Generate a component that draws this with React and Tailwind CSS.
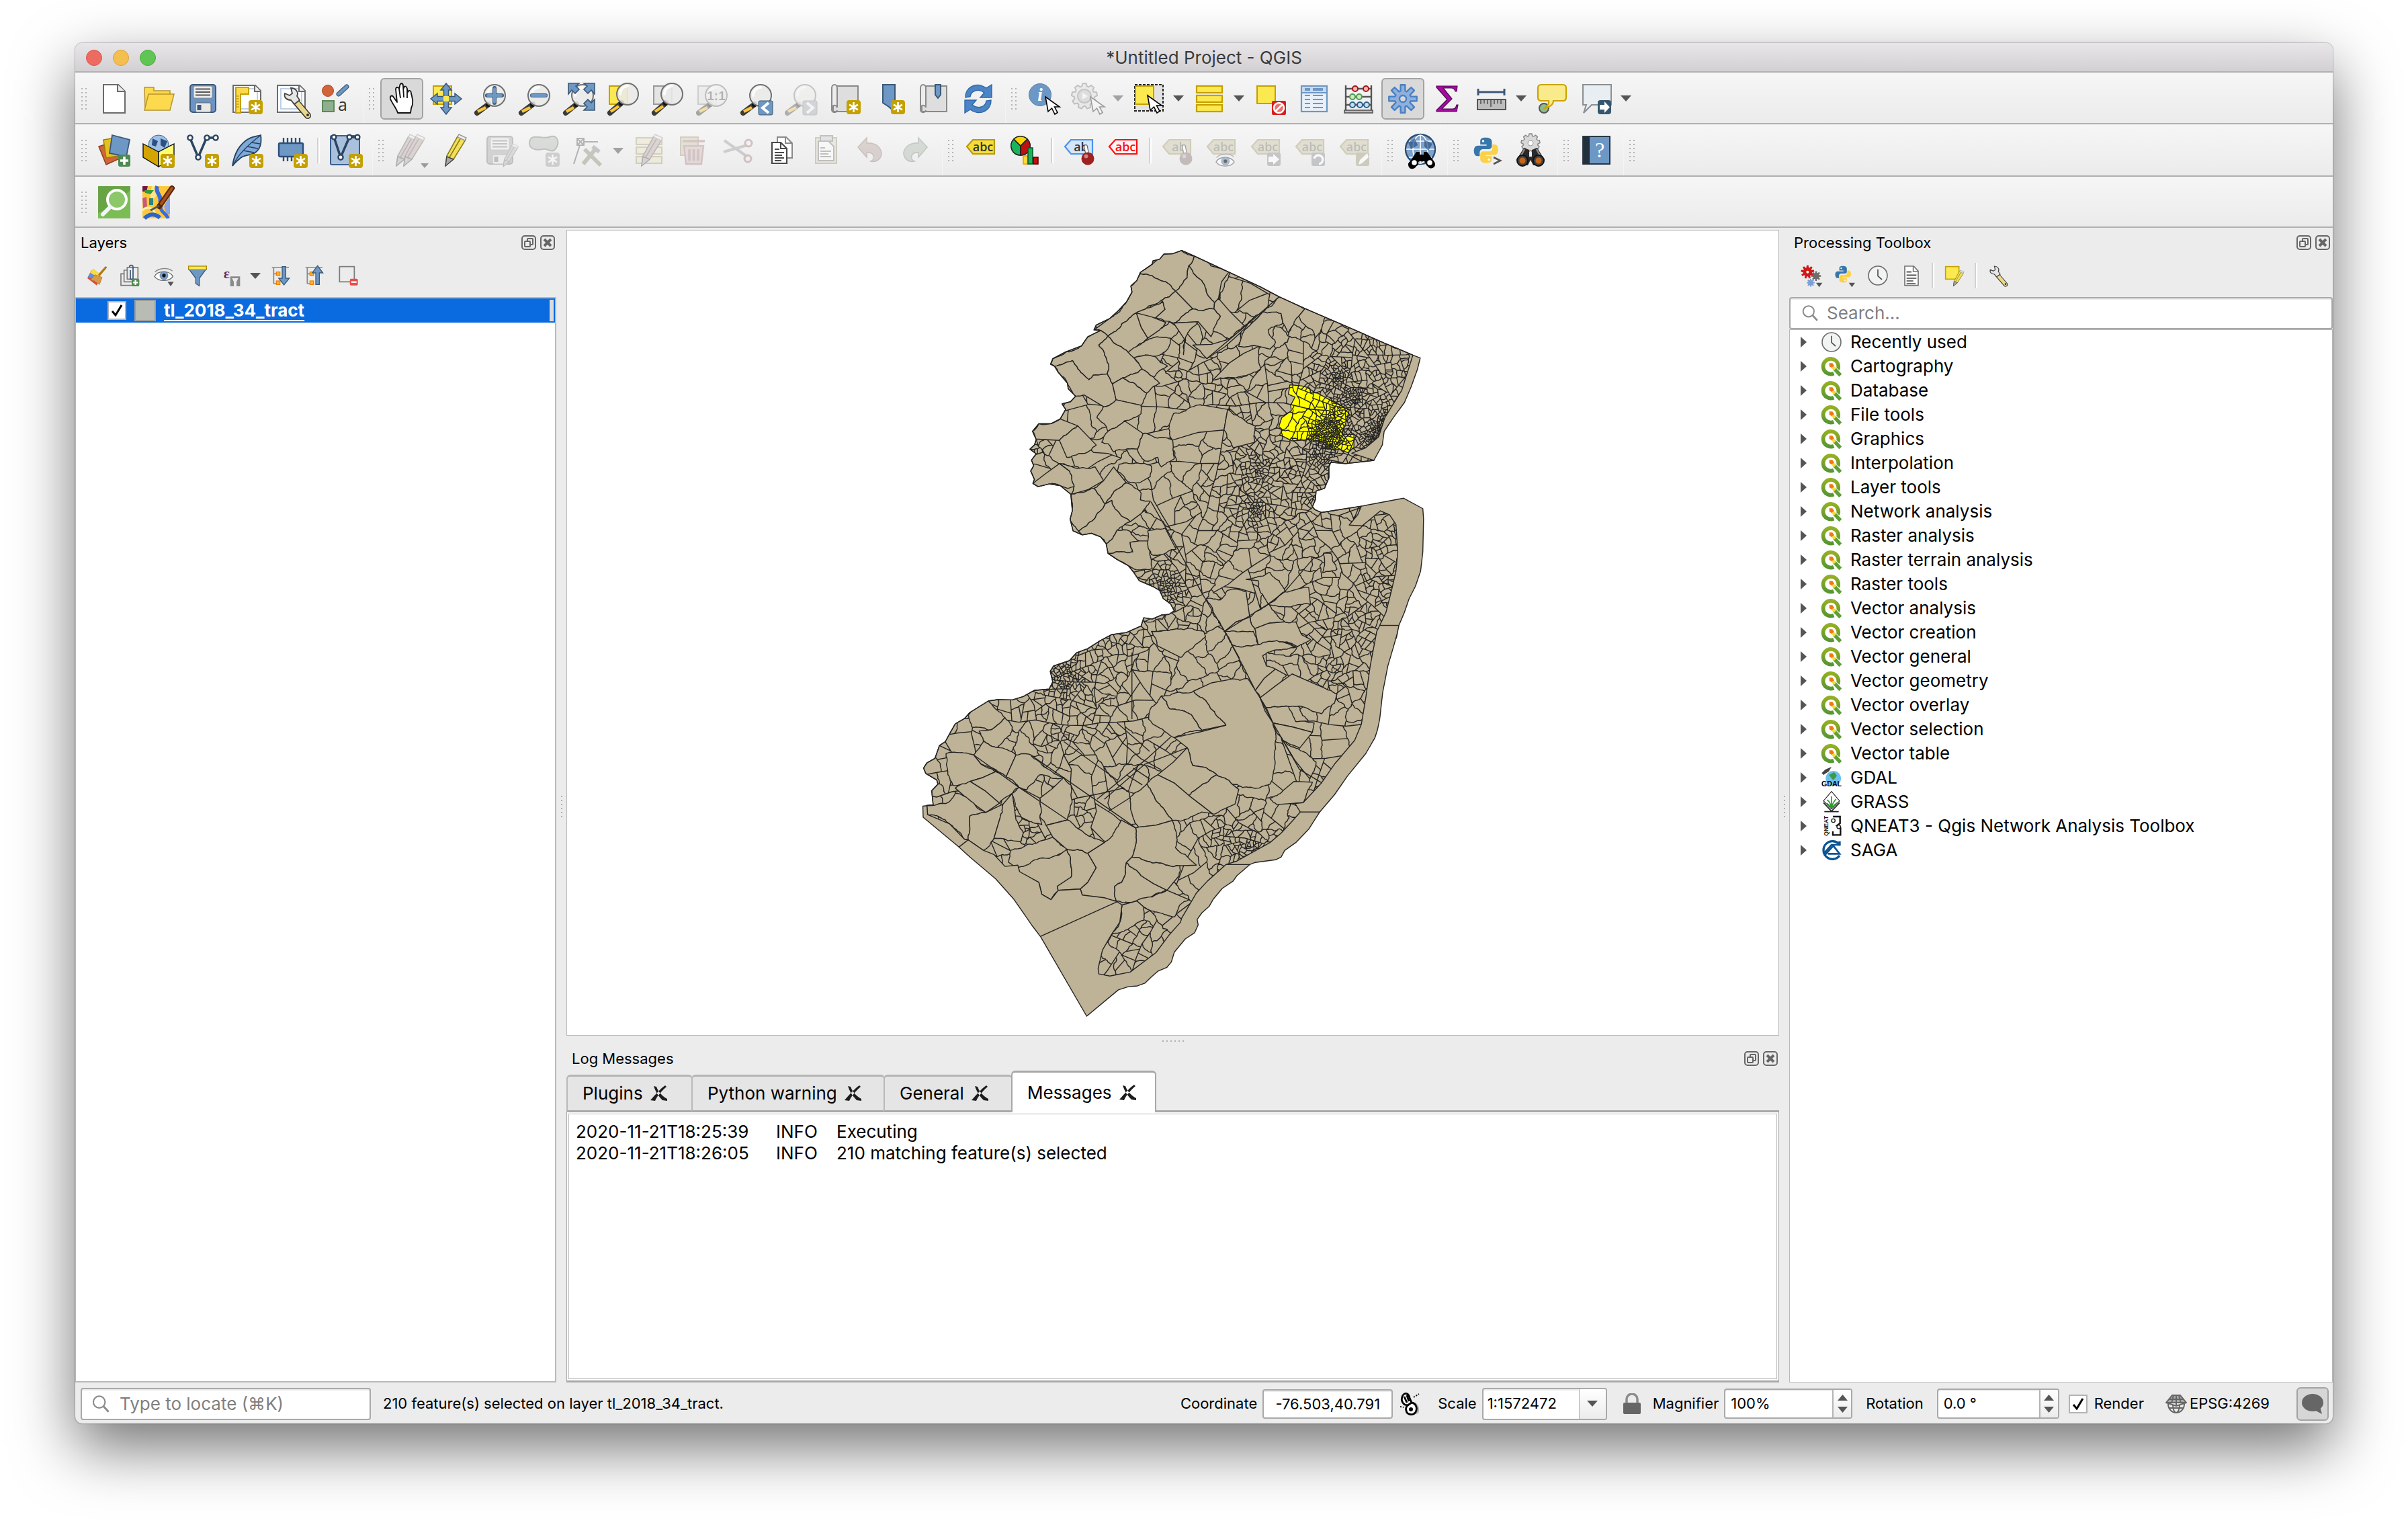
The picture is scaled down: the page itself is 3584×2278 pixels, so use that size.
import React from 'react';

/* ---------- map geometry ---------- */

const parse = (s) => {
  const n = s.trim().split(/[\s,]+/).map(Number);
  const out = [];
  for (let i = 0; i < n.length; i += 2) out.push([n[i], n[i + 1]]);
  return out;
};
const north = (s) => parse(s).map(([x, y]) => [1320 + x / 1.8233, 340 + y / 2.45]);
const south = (s) => parse(s).map(([x, y]) => [1320 + x / 1.8233, 940 + y / 2.529]);

const northEast = north('800,80 835,101 928,159 1015,214 1065,249 1135,292 1190,324 1240,353 1280,376 1350,418 1395,443 1428,462');
const hudson = north('1448,472 1440,515 1423,578 1405,635 1375,690 1350,740 1345,790 1322,846');
const hudsonInner = north('1412,530 1398,590 1375,640 1352,690 1335,760 1300,800 1262,820 1322,846');
const raritan = north('1245,858 1205,853 1200,870 1200,910 1188,948 1165,958 1163,990 1155,1015 1162,1026 1180,1036 1288,1013');
const atlantic = [
  ...north('1403,984 1455,1022 1457,1060 1455,1180 1449,1250 1435,1305 1418,1350 1405,1400 1390,1448 1383,1495'),
  ...south('1387,0 1375,60 1360,130 1346,230 1338,330 1332,370 1325,400 1300,460 1250,545 1215,615 1175,680 1145,745 1110,795 1080,825 1070,850 1055,860 1000,870 985,878 950,920 940,940 910,968 885,1010 875,1035 855,1060 842,1085 845,1105 835,1135 810,1158 780,1208 772,1245 760,1265 735,1280 715,1305 700,1325 680,1335 655,1338 628,1350 542,1449 417,1150 395,1110 345,1010 295,932 225,850 195,812 98,700 97,658'),
];
const shore = [
  ...north('1278,1045 1255,1082 1290,1085 1340,1030 1365,1045 1382,1080 1387,1180 1382,1250 1370,1320 1355,1400 1338,1448'),
  ...south('1330,0 1312,130 1300,250 1288,350 1270,410 1215,500 1180,570 1130,645 1108,648 1122,680 1100,715 1070,760 1040,795 950,865 920,878 870,940 840,985 800,1080 797,1095 765,1145 730,1210 660,1283 605,1298 575,1290 573,1270 585,1200 610,1140 632,1095 638,1030 625,1018 590,1003 530,993 525,970 465,975 445,1010 420,990 412,945 360,905 355,880 320,885 290,840 262,825 220,785 210,783 170,725 110,690 108,655'),
];
const west = [
  ...south('125,653 121,600 138,575 135,560 105,535 99,515 108,495 130,478 142,430 158,415 172,380 185,348 210,328 225,305 275,262 300,257 340,258 370,245 400,222 440,217 450,190 443,150 452,130 495,110 515,80 545,65 575,38 610,12'),
  ...north('650,1474 690,1450 697,1420 720,1425 745,1410 765,1408 780,1395 770,1370 750,1350 740,1320 720,1305 685,1285 670,1255 655,1230 625,1208 600,1185 595,1150 580,1125 555,1112 530,1118 505,1103 497,1060 503,1030 499,970 470,938 440,932 410,942 396,930 400,915 390,885 398,865 392,845 405,822 388,805 400,790 405,770 395,740 412,712 445,712 470,695 485,660 475,640 498,632 512,612 492,585 490,565 465,525 455,503 444,495 450,475 485,450 528,428 545,395 580,372 562,370 568,352 605,328 628,300 650,268 665,232 662,210 678,190 688,160 720,130 722,118 740,112 752,93 775,92'),
];

const state = [...northEast, ...hudson, ...raritan, ...atlantic, ...west];
const land = [...northEast, ...hudsonInner, ...raritan, ...shore, ...west];

const tracts = [
  ...[
    '800,80 835,101 820,135 815,180 800,205 783,228 720,172 688,165 688,160 720,130 752,93',
    '688,165 720,172 783,228 745,262 677,308 600,393 580,372 562,370 605,328 650,268 665,232 662,210',
    '820,135 840,175 855,190 870,240 890,270 888,293 830,293 783,228 800,205 815,180',
    '835,101 928,159 908,195 900,255 890,270 870,240 855,190 840,175 820,135',
    '677,308 750,270 755,295 730,325',
    '750,270 745,262 783,228 830,293 778,345 730,325 755,295',
    '677,308 690,360 708,400 655,452 600,393',
    '677,308 757,343 740,370 708,400 690,360',
    '580,372 600,393 575,425 602,495 598,530 560,535 548,552 520,515 503,482 455,503 444,495 450,475 528,428 545,395',
    '455,503 503,482 520,515 548,552 560,535 598,530 612,567 622,625 588,650 535,607 512,612 490,565 465,525',
    '600,393 655,452 693,513 640,545 612,567 598,530 602,495 575,425',
    '655,452 735,395 770,400 762,440 727,467 670,472',
    '670,472 727,467 762,502 724,543 693,513',
    '640,545 612,567 622,625 690,645 705,600',
    '693,513 724,543 740,565 705,600 640,545',
    '830,293 888,293 905,320 880,395 845,340 778,345',
    '778,345 845,340 820,375 810,400 805,460 808,405',
    '900,255 970,355 930,403 885,375 905,320 888,293 890,270',
    '970,355 1020,305 960,380 868,475 830,425 930,403',
    '1010,430 1015,512 960,540 905,545 885,553 930,490',
    '1020,305 1070,310 1075,345 1035,370 1055,415 1040,440 1010,430 955,430 965,385',
    '1065,249 1135,292 1118,320 1090,380 1075,345 1070,310 1020,305',
    '1118,320 1135,292 1190,324 1162,400 1155,370',
    '622,625 690,645 690,675 645,702 600,740 570,690 588,650',
    '600,740 645,702 695,748 685,790 680,805 615,815 600,785 583,780',
    '695,748 775,772 780,840 745,870 735,835 700,848 680,805 685,790',
    '775,772 915,735 925,660 860,645 840,645 778,675 765,730',
    '412,712 445,712 470,695 518,720 468,773 403,768 395,740',
    '518,720 568,790 488,835 468,773',
    '468,858 565,870 588,920 500,970 508,940 495,885',
    '396,930 468,858 495,885 508,940 490,948 470,938 410,942',
    '500,970 562,948 592,1005 520,1105 497,1060',
    '562,948 588,920 615,870 650,928 592,1005',
    '592,1005 650,928 690,965 688,990 715,995 690,1040 660,1070 625,1030 610,992',
    '520,1105 592,1005 610,992 625,1030 660,1070 625,1100 595,1150 580,1125 530,1118',
    '595,1150 625,1100 660,1105 685,1140 660,1145 667,1180 600,1187',
    '600,1187 667,1180 660,1145 685,1140 718,1140 720,1240 670,1242 655,1230 625,1208',
    '630,860 680,855 717,865 715,905 685,928 655,925 625,885',
    '708,1103 755,1093 785,1170 740,1190 718,1190',
    '925,1320 975,1325 985,1418 917,1470 885,1405 867,1350 905,1355',
    '985,1418 1035,1370 1080,1435 998,1460',
    '998,1460 1080,1435 1110,1435 1125,1480 1150,1500 1115,1525 1075,1508 1008,1518',
    '917,1470 985,1418 998,1460 1000,1500 938,1518',
    '1035,1370 1150,1372 1145,1310 1080,1325',
    '975,1280 1040,1255 1080,1325 1035,1370 1015,1330 1008,1285',
    '1185,1185 1205,1185 1222,1243 1183,1255',
    '925,660 1000,720 998,780 940,800 915,735',
  ].map(north),
  ...[
    '832,225 920,353 780,400 815,438 830,505 865,512 895,540 935,573 965,588 1010,590 1040,575 1048,540 1048,345 1013,250 980,178 935,180',
    '745,243 832,225 920,353 855,372 825,312 768,292',
    '745,243 768,292 825,312 855,372 780,400 735,360 710,330 718,285',
    '735,540 815,438 830,505 865,512 895,540 820,618',
    '705,575 735,540 820,618 885,688 855,680 775,712 740,650',
    '660,625 705,575 740,650 775,712 683,737',
    '675,740 683,737 775,712 785,755 783,815 810,840 840,880 795,883 720,872 665,850',
    '820,618 895,540 935,573 955,595 945,650 905,675 885,688',
    '915,0 995,0 1008,50 935,48',
    '935,48 1008,50 1075,40 1110,60 1090,65 1020,92 1030,130 1055,142 1000,222',
    '1000,222 1055,142 1085,165 1013,250',
    '1013,250 1100,160 1190,215 1222,235 1215,270 1180,310 1090,283 1030,288',
    '1030,288 1090,283 1110,340 1160,345 1155,380 1048,345',
    '1075,410 1140,460 1165,492 1148,555',
    '1048,345 1155,380 1120,440 1075,410',
    '1040,630 1075,600 1105,565 1155,568 1130,645 1058,652',
    '220,315 275,262 320,325 275,372 230,360',
    '250,375 275,372 320,325 340,360 335,390 300,437 262,412',
    '235,465 262,412 300,437 350,465 323,548 255,500',
    '350,465 390,465 480,550 415,540 380,595 358,587 323,548',
    '160,460 235,465 255,500 295,528 225,565 220,583 180,580 165,540',
    '225,565 295,528 358,587 305,647',
    '185,590 225,565 305,647 268,682',
    '108,655 160,648 185,610 268,682 225,695 220,785 210,783 170,725 110,690',
    '220,785 225,695 268,682 315,650 305,710 290,780 262,825',
    '290,780 305,710 315,650 340,610 350,710 370,760 365,788',
    '330,870 335,825 430,785 450,775 500,825 440,855 400,885 355,890',
    '355,890 440,855 488,820 498,850 500,925 462,960 465,975 445,1010 420,990 412,945 360,905',
    '498,850 488,820 545,835 568,890 545,945 525,970 465,975 462,960 500,925',
    '545,835 590,795 635,710 675,740 665,850 650,870 637,945 618,960 622,1015 530,993 525,970 545,945 568,890',
    '650,870 690,920 760,975 700,1010 640,1022 622,1015 618,960 637,945',
    '665,850 720,872 795,883 793,920 760,975 690,920 650,870',
    '697,1038 678,1015 760,975 820,1010 795,1030 780,1075',
    '638,1030 678,1015 697,1038 697,1088 668,1110 640,1130 610,1140 632,1095',
    '358,587 415,628 415,700 420,728 365,700 340,610',
    '415,628 480,550 500,580 490,710 432,730 415,700',
    '432,730 490,710 590,795 545,835 488,820 450,775',
    '718,0 860,0 865,20 798,98 735,55',
  ].map(south),
];

const roads = [
  north('717,997 790,1170 855,1330 917,1470 957,1568'),
  north('1065,249 965,365 868,475'),
  north('917,1470 1035,1370 1080,1325 1160,1200'),
  north('1283,1010 1262,1080'),
  south('235,465 358,587 490,710'),
  south('390,465 520,590 640,705 675,740'),
  south('480,415 625,560'),
  south('570,632 705,480 770,398'),
  south('600,345 640,420 690,480 745,522'),
  south('625,345 713,452'),
  south('668,515 713,555'),
  south('650,540 693,578'),
  south('665,80 665,330'),
  south('590,632 700,500 815,438'),
  south('1013,250 1048,345 1120,520 1180,570'),
];

const seams = [
  north('1338,1448 1390,1448'),
  south('1122,680 1175,680'),
  south('920,878 985,878'),
  south('625,1018 417,1148'),
  south('220,785 195,812'),
];

const essex = north(
  '1094,570 1125,574 1148,582 1150,598 1168,600 1215,635 1255,662 1248,700 1236,750 1268,752 1268,798 1252,818 1228,805 1195,805 1190,780 1150,770 1100,775 1066,752 1074,735 1064,722 1072,690 1098,665 1096,645 1108,615 1090,605',
);

// [x, y, core radius, spacing in the core, growth of the spacing outside it]
const cities = [
  [1978, 646, 20, 3.2, 0.3], [1992, 612, 12, 5, 0.22], [1992, 564, 8, 4, 0.2], [2014, 593, 8, 4, 0.2],
  [2042, 655, 6, 3, 0.25], [2052, 640, 7, 3, 0.25], [2063, 620, 6, 4, 0.25], [2039, 560, 50, 9.5, 0.2], [1967, 679, 12, 5, 0.2],
  [1960, 700, 30, 9, 0.2], [1874, 699, 6, 5, 0.2], [1901, 725, 40, 11, 0.22], [1868, 756, 4, 4, 0.22],
  [1945, 744, 6, 6, 0.25], [1930, 790, 20, 14, 0.25], [2050, 805, 22, 11, 0.25], [2060, 870, 14, 8, 0.25],
  [2035, 840, 20, 13, 0.3], [2017, 932, 25, 10, 0.25], [1967, 935, 16, 12, 0.25], [1984, 999, 8, 8, 0.25],
  [1734, 875, 6, 4, 0.22], [1750, 880, 16, 12, 0.3], [1585, 1010, 12, 5, 0.2], [1610, 1035, 40, 12, 0.24],
  [1666, 955, 14, 10, 0.25], [1630, 965, 14, 10, 0.25], [1578, 1092, 10, 9, 0.3], [1616, 1205, 6, 11, 0.5],
  [1523, 1231, 3, 6, 0.6], [1863, 1260, 12, 6, 0.3], [1825, 1248, 10, 9, 0.35], [1698, 1395, 26, 14, 0.4],
  [1814, 577, 8, 11, 0.24], [1770, 569, 8, 12, 0.3], [1858, 622, 14, 13, 0.24], [1539, 667, 2, 8, 0.5],
  [1803, 724, 14, 14, 0.25], [1935, 560, 14, 13, 0.25], [1870, 640, 40, 17, 0.3], [1600, 940, 8, 10, 0.4],
  [1420, 1170, 3, 9, 0.6], [1960, 1150, 12, 17, 0.4],
];

const rng = (seed) => {
  let a = seed;
  return () => {
    a = (a + 0x6d2b79f5) | 0;
    let t = Math.imul(a ^ (a >>> 15), 1 | a);
    t = (t + Math.imul(t ^ (t >>> 7), 61 | t)) ^ t;
    return ((t ^ (t >>> 14)) >>> 0) / 4294967296;
  };
};

const spacing = (x, y) => {
  let s = 34;
  for (const [cx, cy, r, core, k] of cities) {
    const d = Math.hypot(x - cx, y - cy);
    s = Math.min(s, core + Math.max(0, d - r) * k);
  }
  return s;
};

// Breaks an edge into short wavering segments, the same way from either end
const waver = (a, b, amount, straightShare = 0.3) => {
  const flip = a[0] > b[0] || (a[0] === b[0] && a[1] > b[1]);
  const [p, q] = flip ? [b, a] : [a, b];
  const rand = rng(Math.round(p[0] * 7) * 7919 + Math.round(p[1] * 7) * 104729 + Math.round(q[0] * 7) * 31 + Math.round(q[1] * 7));
  const straight = rand() < straightShare;
  const split = (u, v) => {
    const len = Math.hypot(v[0] - u[0], v[1] - u[1]);
    if (len < 4 || (straight && len < 40)) return [v];
    const k = ((rand() - 0.5) * 2 * amount * Math.min(len, 45)) / len;
    const m = [(u[0] + v[0]) / 2 - (v[1] - u[1]) * k, (u[1] + v[1]) / 2 + (v[0] - u[0]) * k];
    return [...split(u, m), ...split(m, v)];
  };
  const line = [p, ...split(p, q)];
  return flip ? line.reverse() : line;
};

const toPath = (pts, close) => 'M' + pts.map(([x, y]) => `${x.toFixed(1)} ${y.toFixed(1)}`).join('L') + (close ? 'Z' : '');
const waverPoly = (poly) => {
  const out = [];
  poly.forEach((p, i) => out.push(...waver(p, poly[(i + 1) % poly.length], 0.1).slice(0, -1)));
  return toPath(out, true);
};

const area = (poly) => {
  let s = 0;
  poly.forEach(([x, y], i) => {
    const [u, v] = poly[(i + 1) % poly.length];
    s += x * v - u * y;
  });
  return Math.abs(s) / 2;
};

// Cuts a region again and again with wavering borders until each part has its local size
const meshPath = (() => {
  const rand = rng(2018);
  let d = '';
  const at = (poly, lens, target) => {
    let i = 0;
    let t = target;
    while (t > lens[i] && i < poly.length - 1) t -= lens[i++];
    const q = poly[(i + 1) % poly.length];
    const k = lens[i] ? Math.min(1, t / lens[i]) : 0;
    return [i, [poly[i][0] + (q[0] - poly[i][0]) * k, poly[i][1] + (q[1] - poly[i][1]) * k]];
  };
  const stack = [[[1370, 360], [2150, 360], [2150, 960], [2150, 1560], [1370, 1560], [1370, 960]]];
  while (stack.length) {
    const poly = stack.pop();
    const size = area(poly);
    const cx = poly.reduce((s, p) => s + p[0], 0) / poly.length;
    const cy = poly.reduce((s, p) => s + p[1], 0) / poly.length;
    const want = spacing(cx, cy);
    if (size < want * want * (0.6 + rand() * 1.5)) continue;
    const lens = poly.map((p, i) => Math.hypot(poly[(i + 1) % poly.length][0] - p[0], poly[(i + 1) % poly.length][1] - p[1]));
    const total = lens.reduce((a, b) => a + b, 0);
    let best = null;
    for (let i = 0; i < 9; i++) {
      const t = rand() * total;
      const u = (t + total * (0.4 + rand() * 0.2)) % total;
      const [lo, hi] = t < u ? [t, u] : [u, t];
      const [i0, a] = at(poly, lens, lo);
      const [i1, b] = at(poly, lens, hi);
      const len = Math.hypot(a[0] - b[0], a[1] - b[1]) * (0.85 + rand() * 0.3);
      if (i0 !== i1 && (!best || len < best.len)) best = { len, i0, i1, a, b };
    }
    if (!best) continue;
    const cut = waver(best.a, best.b, 0.16, 0.35);
    d += toPath(cut);
    stack.push([...cut, ...poly.slice(best.i1 + 1), ...poly.slice(0, best.i0 + 1)]);
    stack.push([...[...cut].reverse(), ...poly.slice(best.i0 + 1, best.i1 + 1)]);
  }
  return d;
})();

const statePath = toPath(state, true);
const landPath = toPath(land, true);
const essexPath = toPath(essex, true);
const tractPaths = tracts.map(waverPoly);

function MapCanvas() {
  return (
    <svg viewBox="844 343 1803 1198" className="block h-full w-full" role="img" aria-label="New Jersey census tracts" strokeLinejoin="round">
      <clipPath id="land"><path d={landPath} /></clipPath>
      <path d={statePath} fill="#beb297" />
      <path d={essexPath} fill="#ffff00" />
      <g clipPath="url(#land)" stroke="#232323" strokeWidth="1.4">
        <path d={meshPath} fill="none" />
        {tractPaths.map((d, i) => <path key={i} d={d} fill="#beb297" />)}
        {roads.map((r, i) => <path key={i} d={toPath(r)} fill="none" />)}
      </g>
      <g fill="none" stroke="#232323" strokeWidth="1.4">
        <path d={essexPath} />
        <path d={landPath} />
        <path d={statePath} />
        {seams.map((r, i) => <path key={i} d={toPath(r)} />)}
      </g>
    </svg>
  );
}

/* ---------- icon parts ---------- */

const BLUE = '#6d97c4';
const NAVY = '#3b5877';

const gearPath = (cx, cy, outer, inner, teeth) => {
  let d = '';
  for (let i = 0; i < teeth; i++) {
    const a = (i / teeth) * Math.PI * 2 - Math.PI / 2;
    const w = Math.PI / teeth;
    [[-0.75, inner], [-0.4, outer], [0.4, outer], [0.75, inner]].forEach(([k, r], j) => {
      d += `${i + j ? 'L' : 'M'}${(cx + Math.cos(a + w * k) * r).toFixed(1)} ${(cy + Math.sin(a + w * k) * r).toFixed(1)}`;
    });
  }
  return d + 'Z';
};

const Svg = ({ size = 48, children }) => (
  <svg width={size} height={size} viewBox="0 0 48 48" fill="none" aria-hidden="true" className="shrink-0 overflow-visible">{children}</svg>
);

const Star = ({ x = 26, y = 26 }) => (
  <g transform={`translate(${x} ${y})`}>
    <rect width="21" height="21" rx="4" fill="#c4a000" />
    <path d="M10.500 3V18M4 6.700L17 14.300M17 6.700L4 14.300" stroke="#fff" strokeWidth="2.600" />
  </g>
);

const Mag = ({ children, cx = 30, cy = 19, r = 16 }) => (
  <g>
    <path d={`M${cx - 10} ${cy + 14}L4 45`} stroke="#3a3a3a" strokeWidth="8" strokeLinecap="round" />
    <path d={`M${cx - 13} ${cy + 18}L5 43`} stroke="#f8c43c" strokeWidth="4.500" />
    <circle cx={cx - 9} cy={cy + 13} r="4" fill="#111" />
    <circle cx={cx} cy={cy} r={r} fill="#e9e9e7" fillOpacity=".88" stroke="#707070" strokeWidth="2" />
    <path d={`M${cx - 11} ${cy}a11 12 0 0 1 11-12`} stroke="#fff" strokeWidth="4" strokeLinecap="round" opacity=".8" />
    {children}
  </g>
);

const Cursor = ({ x = 24, y = 20 }) => (
  <path transform={`translate(${x} ${y})`} d="M1 1L5 23L10.500 18L15 27L19 24.500L14.500 16H22Z" fill="#fff" stroke="#000" strokeWidth="1.600" />
);

const Disk = () => (
  <g>
    <rect x="5" y="3" width="38" height="41" rx="4" fill="#6b93c4" stroke={NAVY} strokeWidth="2" />
    <rect x="10" y="5" width="28" height="18" rx="2" fill="#ececec" stroke="#888" />
    <path d="M13 9.500H35M13 14H35M13 18.500H35" stroke="#555" strokeWidth="1.800" />
    <rect x="13" y="30" width="23" height="14" rx="2" fill="#e8e8e8" stroke="#666" />
    <rect x="15.500" y="33" width="6" height="8" fill={NAVY} />
  </g>
);

const Pencil = ({ x = 0, y = 0, c = '#f2e05a', e = '#8a7a18' }) => (
  <g transform={`translate(${x} ${y})`}>
    <path d="M28 3L40 8L22 37L10 46L12 32Z" fill={c} stroke={e} strokeWidth="1.600" />
    <path d="M33 5L16 34" stroke={e} strokeWidth="1.500" />
    <path d="M30 0L41 5L39 9L28 4Z" fill="#eee" stroke="#999" strokeWidth="1.400" />
    <path d="M12 33L22 37L10 47Z" fill="#aaa" stroke="#444" strokeWidth="1.400" />
  </g>
);

const Tag = ({ fill = '#d6d2bc', stroke = '#bab593', color = '#9a9a90', text = 'abc' }) => (
  <g>
    <path d="M3 18L12 8H44V29H12Z" fill={fill} stroke={stroke} strokeWidth="2.200" />
    <text x="27" y="25" textAnchor="middle" fontSize="18" fontFamily="Open Sans, sans-serif" fontWeight="600" fill={color}>{text}</text>
  </g>
);

const Pin = ({ c = '#a02020' }) => (
  <g>
    <path d="M34 18L36 28" stroke="#666" strokeWidth="6" strokeLinecap="round" />
    <path d="M34 18L36 28" stroke="#fff" strokeWidth="3.500" strokeLinecap="round" />
    <circle cx="37" cy="36" r="9.500" fill={c} />
    <circle cx="34.500" cy="32.500" r="3" fill="#fff" opacity=".45" />
  </g>
);

const Scroll = () => (
  <g stroke="#8a8a8a" strokeWidth="2">
    <path d="M10 5H43V43H6V8Z" fill="#dedede" />
    <path d="M4 8a4 5 0 0 1 8 0V37a4 4 0 0 0-8 2Z" fill="#ededed" />
    <path d="M4 39a4 4 0 0 0 8 2" />
  </g>
);

const Python = ({ x = 0, y = 0, k = 1 }) => {
  const d = 'M22 2c-8 0-9 3-9 7v5h11v2H9c-5 0-7 4-7 9s2 9 6 9h4v-6c0-4 3-6 6-6h10c3 0 5-2 5-5V9c0-5-4-7-11-7z';
  return (
    <g transform={`translate(${x} ${y}) scale(${k})`}>
      <path d={d} fill="#3776a9" />
      <g transform="rotate(180 23 24)"><path d={d} fill="#fcd146" /></g>
      <circle cx="18" cy="8" r="2" fill="#fff" />
      <circle cx="28" cy="40" r="2" fill="#fff" />
    </g>
  );
};

const Wrench = ({ x = 0, y = 0 }) => (
  <g transform={`translate(${x} ${y})`}>
    <path d="M22 22L40 43" stroke="#333" strokeWidth="10" strokeLinecap="round" />
    <path d="M24 24L40 43" stroke="#ead88a" strokeWidth="7" strokeLinecap="round" />
    <circle cx="40" cy="42" r="2" fill="#333" />
    <path d="M6 10L13 13L17 10L15 2C22 2 27 8 24 14L28 20L20 26L15 20C9 20 4 16 6 10Z" fill="#e6e6e6" stroke="#444" strokeWidth="1.800" />
  </g>
);

const Eye = () => (
  <g>
    <path d="M3 26C10 12 36 12 44 26C36 38 12 38 3 26Z" fill="#fff" stroke="#6c6c6c" strokeWidth="2" />
    <circle cx="24" cy="24" r="9" fill="#7a9cc6" stroke="#44617f" />
    <circle cx="24" cy="24" r="4" fill="#111" />
    <path d="M4 16C14 6 34 6 43 14" stroke="#8a8a8a" strokeWidth="2" />
  </g>
);

const Tri = ({ x, y }) => <path d={`M${x} ${y}h14l-7 10z`} fill="#555" />;

const Binoculars = () => (
  <g>
    <path d="M14 20L22 23V33H26V23L34 20L45 38L35 46H28L24 38L20 46H13L3 38Z" fill="#2a2a2a" />
    <path d="M15 22L9 33M33 22L39 33" stroke="#8a8a8a" strokeWidth="2.500" />
    <circle cx="12" cy="39" r="8" fill="#444" stroke="#111" strokeWidth="2" />
    <circle cx="36" cy="39" r="8" fill="#444" stroke="#111" strokeWidth="2" />
    <circle cx="12" cy="39" r="4.500" fill="#c86414" />
    <circle cx="36" cy="39" r="4.500" fill="#c86414" />
  </g>
);

const Sheets = () => (
  <g stroke="#c4a000" strokeWidth="2.200" fill="#fce94f">
    <rect x="5" y="5" width="38" height="10" /><rect x="5" y="19" width="38" height="10" /><rect x="5" y="33" width="38" height="10" />
  </g>
);

const Page = () => (
  <g stroke="#6b6b6b" strokeWidth="2">
    <path d="M3 4H36L44 12V44H3Z" fill="#fff" />
    <rect x="8" y="9" width="31" height="30" stroke="#bcd0ec" />
    <path d="M35 4V13H44" fill="#eee" />
  </g>
);

const ICONS = {
  new: <g stroke="#6b6b6b" strokeWidth="2"><path d="M8 3H30L40 13V45H8Z" fill="#fff" /><path d="M29 3V13H40" fill="#eee" /></g>,
  open: <g stroke="#b8942a" strokeWidth="1.500" fill="#fcd94d"><path d="M3 7H17V12H41V18L40 40H4Z" /><path d="M9 17H47L41 41H3Z" /></g>,
  save: <Disk />,
  layout: <g><Page /><path d="M7 7H26V17H14V45H7Z" fill="#fcd94d" stroke="#c4a000" strokeWidth="2" /><path d="M8 20H12M8 24H12M8 28H12M8 32H12M8 36H12" stroke="#a88900" /><Star /></g>,
  manager: <g><Page /><Wrench x={8} y={6} /></g>,
  style: (
    <g>
      <circle cx="12" cy="12" r="8.500" fill="#d2643a" stroke="#a84a24" />
      <path d="M28 17L40 6" stroke={NAVY} strokeWidth="7" strokeLinecap="round" /><path d="M28 17L40 6" stroke={BLUE} strokeWidth="4.500" strokeLinecap="round" />
      <rect x="4" y="27" width="17" height="16" fill="#8fb08f" stroke="#5a8a5a" strokeWidth="2" />
      <text x="34" y="42" textAnchor="middle" fontSize="25" fontFamily="Open Sans, sans-serif" fill="#333">a</text>
    </g>
  ),
  hand: <path d="M18 45C16 38 9 30 7 24C6 19 10 18 12 22L17 29L15 10C15 6 19 6 20 9L21 5C21 0 26 0 26 5L27 8C28 4 31 5 32 9L33 14C35 10 38 12 38 16C40 24 42 31 38 38L37 45Z M20 9L22 23M26 5L27 22M32 9L32 23" fill="#fff" stroke="#111" strokeWidth="1.800" strokeLinejoin="round" />,
  pan: (
    <g>
      <rect x="5" y="5" width="27" height="27" fill="#fce94f" stroke="#c4a000" strokeWidth="2" />
      <path d="M24 1L32 11H27.500V20.500H37V16L47 24L37 32V27.500H27.500V37H32L24 47L16 37H20.500V27.500H11V32L1 24L11 16V20.500H20.500V11H16Z" fill={BLUE} stroke={NAVY} strokeWidth="1.500" />
      <rect x="20" y="20" width="8" height="8" fill="#fce94f" />
    </g>
  ),
  zoomIn: <Mag><path d="M30 8V30M19 19H41" stroke={NAVY} strokeWidth="6" strokeLinecap="round" /><path d="M30 9V29M20 19H40" stroke={BLUE} strokeWidth="4" strokeLinecap="round" /></Mag>,
  zoomOut: <Mag><path d="M20 19H40" stroke={NAVY} strokeWidth="6" strokeLinecap="round" /><path d="M20 19H40" stroke={BLUE} strokeWidth="4" strokeLinecap="round" /></Mag>,
  zoomFull: (
    <g><Mag cx={29} cy={19} />
      <g fill={BLUE} stroke={NAVY} strokeWidth="1.600"><path d="M8 1H24L19 5L24 10L18 16L13 11L8 17Z" /><path d="M47 1H31L36 5L31 10L37 16L42 11L47 17Z" /><path d="M47 41V25L42 30L37 25L31 31L36 36L31 41Z" /></g>
    </g>
  ),
  zoomSel: <g><rect x="3" y="5" width="27" height="27" fill="#fce94f" stroke="#c4a000" strokeWidth="2" /><Mag cy={17} /></g>,
  zoomLayer: <g><rect x="3" y="5" width="27" height="27" fill="#e4e4e4" stroke="#999" strokeWidth="2" /><Mag cy={17} /></g>,
  zoomOne: <g opacity=".4"><rect x="3" y="5" width="27" height="27" fill="#e4e4e4" stroke="#999" strokeWidth="2" /><Mag><text x="30" y="26" textAnchor="middle" fontSize="19" fontWeight="700" fontFamily="Liberation Sans, sans-serif" fill="#555">1:1</text></Mag></g>,
  zoomLast: <g><Mag /><rect x="27" y="27" width="21" height="21" rx="2" fill={BLUE} stroke={NAVY} /><path d="M42 30L33 37.500L42 45" stroke="#fff" strokeWidth="4" /></g>,
  zoomNext: <g opacity=".35"><Mag /><rect x="27" y="27" width="21" height="21" rx="2" fill="#9aa5ae" stroke="#777" /><path d="M33 30L42 37.500L33 45" stroke="#fff" strokeWidth="4" /></g>,
  newMap: <g><Scroll /><Star /></g>,
  newMark: <g><path d="M14 3H32V44L23 36L14 30Z" fill={BLUE} stroke={NAVY} strokeWidth="2" /><Star /></g>,
  marks: <g><Scroll /><path d="M26 3H34V18L30 23L26 18Z" fill={BLUE} stroke={NAVY} strokeWidth="2" /></g>,
  refresh: (
    <g fill="#4a84c4" stroke="#2d66a8" strokeWidth="1.400">
      <path d="M5 22C4 8 20-3 36 8L44 3V22H27L33 15C24 8 13 12 12 21Z" />
      <path d="M43 26C44 40 28 51 12 40L4 45V26H21L15 33C24 40 35 36 36 27Z" />
    </g>
  ),
  identify: <g><circle cx="18" cy="18" r="16.500" fill={BLUE} stroke="#5a82b0" /><text x="18" y="27" textAnchor="middle" fontSize="27" fontStyle="italic" fontWeight="700" fontFamily="Liberation Serif, serif" fill="#fff">i</text><Cursor x={25} y={20} /></g>,
  action: <g opacity=".35"><path d={gearPath(18, 20, 19, 15, 9)} fill="#ddd" stroke="#666" strokeWidth="2" /><circle cx="18" cy="20" r="10" fill="#b4b9be" stroke="#777" strokeWidth="2" /><path d="M15 15L23 20L15 25Z" fill="#fff" /><Cursor x={26} y={20} /></g>,
  select: <g><rect x="3" y="3" width="42" height="39" fill="#e2e2e2" stroke="#222" strokeWidth="2" strokeDasharray="4 2" /><rect x="4" y="5" width="27" height="27" fill="#fce94f" stroke="#c4a000" strokeWidth="2" /><Cursor x={21} y={18} /></g>,
  rows: <Sheets />,
  deselect: <g><rect x="5" y="5" width="27" height="26" fill="#fce94f" stroke="#c4a000" strokeWidth="2" /><rect x="27" y="27" width="21" height="21" rx="2" fill="#d91e1e" /><circle cx="37.500" cy="37.500" r="7.500" fill="#e87070" stroke="#fff" strokeWidth="2.600" /><path d="M32 43L43 32" stroke="#fff" strokeWidth="2.600" /></g>,
  table: (
    <g><rect x="5" y="5" width="38" height="38" fill="#e8f0fa" stroke={BLUE} strokeWidth="2.200" /><rect x="5" y="5" width="38" height="10" fill="#c5daf2" stroke={BLUE} strokeWidth="2" />
      <path d="M10 10H18M22 10H37" stroke={BLUE} strokeWidth="4" /><path d="M10 19H18M22 19H37M10 25H18M22 25H37M10 31H18M22 31H37M10 37H18M22 37H37" stroke={BLUE} strokeWidth="2.200" /></g>
  ),
  abacus: (
    <g><path d="M5 4V41M43 4V41M5 9H43M5 21H43M5 33H43" stroke="#555" strokeWidth="2.400" /><rect x="3" y="41" width="42" height="4" fill="#bbb" stroke="#555" strokeWidth="1.600" />
      <g fill="#f7b6b6" stroke="#a81414" strokeWidth="2"><circle cx="19" cy="9" r="4" /><circle cx="35" cy="9" r="4" /></g>
      <g fill="#c8f0c0" stroke="#4f9a4f" strokeWidth="2"><circle cx="15" cy="21" r="4" /><circle cx="25" cy="21" r="4" /></g>
      <g fill="#c4e2f6" stroke="#2d5f8c" strokeWidth="2"><circle cx="15" cy="33" r="4" /><circle cx="26" cy="33" r="4" /><circle cx="36" cy="33" r="4" /></g></g>
  ),
  gear: <g stroke="#4a80c4" strokeWidth="2.400" fill="#8fb0dc"><path d={gearPath(24, 24, 21, 12, 8)} strokeLinejoin="round" /><circle cx="24" cy="24" r="5" fill="#d8d8d8" /></g>,
  sigma: <path d="M8 5H39L38 13H36C35 9 33 8 30 8H18L31 24L16 39H32C36 39 37 37 38 33H40L38 43H8V41L24 25L8 7Z" fill="#a80aa0" stroke="#4d0a55" strokeWidth="1.200" />,
  measure: <g><path d="M4 14H43M4 9V19M43 9V19" stroke={NAVY} strokeWidth="3" /><rect x="3" y="25" width="42" height="15" fill="#bdbdbd" stroke="#555" strokeWidth="2" /><path d="M8 26V32M13 26V31M18 26V32M23 26V36M28 26V32M33 26V31M38 26V32" stroke="#555" strokeWidth="1.600" /></g>,
  tips: <g><circle cx="12" cy="38" r="7" fill="#8dbb8d" stroke="#555" strokeWidth="2" /><path d="M8 3H40Q45 3 45 8V22Q45 27 40 27H26C26 33 19 37 13 38C18 34 20 31 19 27H8Q3 27 3 22V8Q3 3 8 3Z" fill="#f9ea8c" stroke="#c9a400" strokeWidth="2.200" /></g>,
  annot: <g><path d="M4 3H46V33H17L5 45L9 33H4Z" fill="#e8eef2" stroke="#8a8f93" strokeWidth="2" /><rect x="26" y="26" width="20" height="21" rx="4" fill="#34566e" /><path d="M29 33H36V28L44 36.500L36 45V40H29Z" fill="#fff" /></g>,

  source: (
    <g><path d="M1 18L20 12L32 36L12 45Z" fill="#d2643a" stroke="#8e3f1e" strokeWidth="1.500" /><path d="M8 8L26 5L30 32L12 35Z" fill="#e6c01e" stroke="#9a7c08" strokeWidth="1.500" /><path d="M21 1L47 8L42 33L17 28Z" fill={BLUE} stroke={NAVY} strokeWidth="1.800" />
      <rect x="30" y="30" width="18" height="18" rx="3" fill="#4f8a52" /><path d="M39 33V45M33 39H45" stroke="#fff" strokeWidth="3.600" /></g>
  ),
  geopkg: (
    <g><circle cx="24" cy="16" r="15" fill="#9fc0e4" stroke="#3d6894" /><path d="M15 6L23 10L20 18L14 16ZM27 6L37 10L33 20L27 16Z" fill="#2c5080" />
      <path d="M1 14L24 26V48L1 34Z" fill="#d4a500" stroke="#111" strokeWidth="1.400" /><path d="M47 14L24 26V48L47 34Z" fill="#ffff70" stroke="#111" strokeWidth="1.400" /><Star x={27} y={29} /></g>
  ),
  shape: <g stroke="#2c4560" strokeWidth="2.400" fill="#fff"><path d="M5 6L17 34L29 6M33 5H42" fill="none" strokeWidth="3.500" /><circle cx="5" cy="5" r="3.600" /><circle cx="30" cy="5" r="3.600" /><circle cx="43" cy="5" r="3.600" /><circle cx="17" cy="34" r="3.600" /><g stroke="none"><Star x={27} y={29} /></g></g>,
  feather: <g><path d="M2 47C4 34 8 20 22 9C30 3 38 3 44 1C46 14 43 22 36 27C28 32 18 30 13 36C8 40 4 44 2 47Z" fill="#7fa9d8" stroke="#24405f" strokeWidth="1.800" /><path d="M3 46C9 32 22 18 43 2M18 24L34 27M24 18L40 21M30 12L43 14" stroke="#24405f" strokeWidth="1.400" /><Star x={27} y={29} /></g>,
  chip: <g stroke="#2d4f78" strokeWidth="2.400"><path d="M12 5V12M18 5V12M24 5V12M30 5V12M36 5V12M12 33V40M18 33V40M24 33V40" /><rect x="5" y="13" width="36" height="20" rx="2" fill={BLUE} /><g stroke="none"><Star x={27} y={29} /></g></g>,
  virtual: <g><rect x="2" y="2" width="43" height="43" rx="2" fill="#a9c1dd" stroke="#3b6090" strokeWidth="2" /><g stroke="#2c4560" strokeWidth="2.400" fill="#fff"><path d="M7 4L17 34L30 4M33 4H42" fill="none" strokeWidth="3.500" /><circle cx="7" cy="4" r="3.400" /><circle cx="30" cy="4" r="3.400" /><circle cx="42" cy="4" r="3.400" /><circle cx="17" cy="34" r="3.600" /></g><Star x={29} y={29} /></g>,
  pencils: <g><g opacity=".38"><Pencil x={-8} c="#b9a4a0" e="#6a5a58" /><Pencil x={3} c="#b9a4a0" e="#6a5a58" /></g><path d="M38 43h12l-6 7z" fill="#999" /></g>,
  pencil: <Pencil x={-1} />,
  saveEdits: <g opacity=".3" className="grayscale"><Disk /><g transform="translate(22 14) scale(.72)"><Pencil c="#b9a4a0" e="#6a5a58" /></g></g>,
  polygon: <g opacity=".4"><path d="M8 4C18 2 24 8 34 3C44 1 47 12 42 20C36 30 30 20 22 22C12 24 2 22 2 13C2 8 4 5 8 4Z" fill="#b5bab5" stroke="#777" strokeWidth="2" /><g className="grayscale"><Star x={26} y={27} /></g></g>,
  vertex: <g opacity=".4" stroke="#555" strokeWidth="2"><rect x="7" y="6" width="10" height="10" /><path d="M7 6L17 16M17 6L7 16M18 11H38M11 16L2 44" /><path d="M18 22L42 46M34 22L16 44" strokeWidth="6" stroke="#8a8872" /><path d="M30 18L40 26" strokeWidth="6" stroke="#888" /></g>,
  attrs: <g opacity=".38"><g className="grayscale-75"><Sheets /></g><Pencil x={3} c="#b9a4a0" e="#6a5a58" /></g>,
  trash: <g opacity=".34"><rect x="5" y="4" width="26" height="27" fill="#c9c3a4" stroke="#948d66" strokeWidth="2" /><path d="M10 17H39L36 44H13Z" fill="#d0acac" stroke="#9c7070" strokeWidth="2.400" /><path d="M8 10H41M18 22V39M24.500 22V39M31 22V39" stroke="#9c7070" strokeWidth="3.600" /></g>,
  cut: <g opacity=".4" stroke="#666" strokeWidth="2.200"><path d="M4 9L38 33M3 26L38 16" strokeWidth="4" stroke="#999" /><circle cx="39" cy="36" r="5" stroke="#a87878" strokeWidth="3" /><circle cx="40" cy="13" r="5" stroke="#a87878" strokeWidth="3" /></g>,
  copy: <g stroke="#8a8a8a" strokeWidth="2"><path d="M17 4H30L39 13V35H17Z" fill="#fff" /><path d="M29 4V13H39" /><path d="M9 12H22L31 21V43H9Z" fill="#fff" stroke="#4a4a4a" strokeWidth="2.200" /><path d="M22 12V21H31M13 22H20M13 27H27M13 31H24M13 35H27M13 39H23" stroke="#4a4a4a" /></g>,
  paste: <g opacity=".4" stroke="#777" strokeWidth="2"><rect x="8" y="5" width="31" height="38" fill="#ddd9c4" stroke="#9a957a" /><path d="M12 10H27L35 18V39H12Z" fill="#fff" /><rect x="15" y="2" width="18" height="8" fill="#ccc" /><path d="M15 20H22M15 25H31M15 29H27M15 33H31" /></g>,
  undo: <path opacity=".32" d="M5 19L18 5V13C32 12 40 20 40 29C39 37 32 42 24 40C31 37 30 26 18 27V34Z" fill="#a89088" stroke="#7a6058" strokeWidth="1.600" />,
  redo: <path opacity=".32" d="M42 19L29 5V13C15 12 7 20 7 29C8 37 15 42 23 40C16 37 17 26 29 27V34Z" fill="#9cab9c" stroke="#5f745f" strokeWidth="1.600" />,
  label: <Tag fill="#f6de3a" stroke="#b89a10" color="#333" />,
  diagram: (
    <g stroke="#222" strokeWidth="1.600"><circle cx="17" cy="17" r="14" fill="#e8b400" /><path d="M17 17V31A14 14 0 0 1 7 7Z" fill="#18b45c" /><path d="M17 17V31A14 14 0 0 0 27 7Z" fill="#c01010" /><path d="M17 17L7 7A14 14 0 0 1 27 7Z" fill="#ffd400" />
      <rect x="21" y="32" width="7" height="12" fill="#ffd83a" stroke="#f0a000" /><rect x="28" y="20" width="7" height="24" fill="#18b45c" stroke="#0c5a2c" /><rect x="36" y="34" width="7" height="10" fill="#c01010" stroke="#600" /></g>
  ),
  pinLabel: <g><Tag fill="#d3e6fb" stroke="#4a94ea" color="#333" text="ab" /><Pin /></g>,
  redLabel: <Tag fill="#fff4f4" stroke="#fb0f0f" color="#fb0f0f" />,
  lPin: <g opacity=".6"><Tag text="ab" /><Pin c="#a89898" /></g>,
  lEye: <g opacity=".6"><Tag /><g transform="translate(14 24) scale(.66)"><Eye /></g></g>,
  lMove: <g opacity=".6"><Tag /><rect x="26" y="27" width="20" height="20" rx="3" fill="#a8aaac" /><path d="M28 33H35V29L44 37L35 45V41H28Z" fill="#fff" /></g>,
  lRotate: <g opacity=".6"><Tag /><rect x="26" y="27" width="20" height="20" rx="3" fill="#a8aaac" /><path d="M37 44A6.500 6.500 0 1 0 30 36" stroke="#fff" strokeWidth="3.600" /></g>,
  lEdit: <g opacity=".6"><Tag /><rect x="26" y="27" width="20" height="20" rx="3" fill="#b8b49c" /><path d="M30 45L32 38L43 28L45 34L35 43Z" fill="#fff" /></g>,
  meta: (
    <g><circle cx="24" cy="22" r="22" fill="#7da2cc" stroke="#2c4c74" strokeWidth="2.400" /><path d="M24 1V43M3 22H45M7 10H41M7 34H41" stroke="#fff" strokeWidth="1.600" /><ellipse cx="24" cy="22" rx="11" ry="21" stroke="#fff" strokeWidth="1.600" /><path d="M6 12L16 6L20 16L10 22ZM30 8L42 14L36 24L30 18Z" fill="#2c5080" opacity=".7" />
      <path d="M18 26H23V30H29V26H34L44 40A6 6 0 1 1 34 45L30 40H22L18 45A6 6 0 1 1 9 40Z" fill="#000" /><circle cx="15" cy="42" r="5" fill="#fff" stroke="#000" strokeWidth="2.500" /><circle cx="38" cy="42" r="5" fill="#fff" stroke="#000" strokeWidth="2.500" /></g>
  ),
  python: <g><Python x={4} y={3} k={0.86} /><path d="M35 34L45 39L35 44" stroke="#555" strokeWidth="2.600" /></g>,
  binoculars: <g><path d={gearPath(24, 13, 14, 11, 9)} fill="#d8d8d8" stroke="#888" strokeWidth="1.500" /><circle cx="24" cy="13" r="4" fill="#fff" stroke="#999" /><Binoculars /></g>,
  help: <g><rect x="4" y="3" width="40" height="41" fill={BLUE} stroke="#1f2b38" strokeWidth="1.800" /><rect x="5" y="3" width="9" height="41" fill="#22303e" /><text x="29" y="34" textAnchor="middle" fontSize="32" fontFamily="Liberation Serif, serif" fill="#fff">?</text></g>,
  search3: <g><rect width="48" height="48" fill="#7cbc54" /><path d="M0 0H48V6L18 32L0 40Z" fill="#68a444" /><circle cx="28" cy="20" r="14" fill="#8cc86a" stroke="#fff" strokeWidth="4" /><path d="M18 31L7 42" stroke="#eef6f6" strokeWidth="6" strokeLinecap="round" /></g>,
  osm: (
    <g><path d="M0 0H41V48H0Z" fill="#ffc83a" /><path d="M14 0H22V14L12 22V10Z" fill="#ffe48a" /><path d="M0 0H8L6 8H0Z" fill="#7a1040" /><path d="M3 6L17 6L12 12L4 10Z" fill="#2c9c3c" /><path d="M0 18L6 16L7 30L1 33Z" fill="#c85a78" /><path d="M10 18H16V28H10Z" fill="#2c8484" />
      <path d="M22 0C18 10 30 14 26 24" stroke="#3a6cd8" strokeWidth="6" /><path d="M41 14L32 30L36 42L41 42Z" fill="#8aa4e8" /><path d="M28 28C24 38 36 40 38 48" stroke="#3a6cd8" strokeWidth="5" /><path d="M0 36C8 28 20 34 18 42" stroke="#f6f0b0" strokeWidth="3" /><path d="M3 48C10 41 18 40 26 47" stroke="#2c64c8" strokeWidth="6" />
      <path d="M44 3L25 30" stroke="#5a2408" strokeWidth="8" strokeLinecap="round" /><path d="M44 3L28 26" stroke="#a8501c" strokeWidth="4" strokeLinecap="round" /><path d="M25 29L12 36" stroke="#555" strokeWidth="3" /></g>
  ),

  brush: <g><path d="M3 30L12 12L32 24L24 46Z" fill="#e24a3a" /><path d="M9 18L16 8L34 22L30 30Z" fill="#f6dc4a" /><path d="M4 27L10 18L30 32L27 38Z" fill="#5a92dc" /><path d="M30 22L44 6" stroke="#b07818" strokeWidth="5" strokeLinecap="round" /><path d="M20 22L36 28L30 44L18 36L10 34Z" fill="#d89a4a" stroke="#a86a20" /></g>,
  group: <g stroke="#7c7c7c" strokeWidth="2.600"><path d="M10 20H3V46H30" /><path d="M17 12H10V38H30" /><rect x="17" y="6" width="24" height="26" /><path d="M24 12V30a3 3 0 0 0 6 0V5a4 4 0 0 0-8 0" stroke={NAVY} strokeWidth="2.600" /><rect x="27" y="31" width="17" height="17" rx="3" fill="#4f8a52" stroke="none" /><path d="M35.500 34V45M30 39.500H41" stroke="#fff" strokeWidth="3.600" /></g>,
  eye: <g><Eye /><Tri x={32} y={38} /></g>,
  filter: <g><path d="M5 10H43L28 30V47L20 42V30Z" fill={BLUE} stroke={NAVY} strokeWidth="2" /><rect x="4" y="3" width="40" height="8" fill="#fce94f" stroke="#a88900" strokeWidth="2" /></g>,
  expr: <g><text x="14" y="30" textAnchor="middle" fontSize="32" fontWeight="700" fontFamily="Liberation Serif, serif" fill="#5c2f66">ε</text><path d="M22 26H44V48H36V38L40 30H26L30 38V48H22Z" fill="#8a8a8a" /></g>,
  expand: <g><path d="M4 6H42M8 6V42M8 20H16M8 42H16" stroke="#888" strokeWidth="2.600" /><rect x="14" y="16" width="8" height="8" fill="#ffb43a" stroke="#f08000" strokeWidth="2" /><rect x="14" y="36" width="8" height="8" fill="#ffb43a" stroke="#f08000" strokeWidth="2" /><path d="M27 4H35V30H43L31 45L19 30H27Z" fill={BLUE} stroke={NAVY} strokeWidth="2" /></g>,
  collapse: <g><path d="M4 6H42M8 6V42M8 20H16M8 42H16" stroke="#888" strokeWidth="2.600" /><rect x="14" y="16" width="8" height="8" fill="#ffb43a" stroke="#f08000" strokeWidth="2" /><rect x="14" y="36" width="8" height="8" fill="#ffb43a" stroke="#f08000" strokeWidth="2" /><path d="M27 44H35V18H43L31 2L19 18H27Z" fill={BLUE} stroke={NAVY} strokeWidth="2" /></g>,
  remove: <g><rect x="5" y="4" width="33" height="34" stroke="#7c7c7c" strokeWidth="2.600" /><rect x="28" y="31" width="18" height="15" rx="3" fill="#ef4a4a" /><path d="M31 38.500H43" stroke="#fff" strokeWidth="3.600" /></g>,
  gears: <g><path d={gearPath(17, 16, 15, 10, 9)} fill="#d01818" /><circle cx="17" cy="16" r="3" fill="#fff" /><path d={gearPath(36, 25, 11, 7, 8)} fill="#6c6c6c" /><path d={gearPath(24, 40, 9, 6, 8)} fill="#7a9fd8" /><Tri x={36} y={40} /></g>,
  py2: <g><Python x={2} y={1} k={0.84} /><Tri x={34} y={40} /></g>,
  clock: <g><circle cx="24" cy="24" r="21" fill="#f2f4f4" stroke="#6c6c6c" strokeWidth="2.400" /><path d="M24 10V25L33 33" stroke="#555" strokeWidth="2.600" /></g>,
  doc: <g stroke="#777" strokeWidth="2.600"><path d="M9 3H29L39 14V46H9Z" fill="#fff" /><path d="M28 3V15H39" /><path d="M13 16H24M13 23H35M13 30H35M13 36H28M13 42H33" stroke="#444" /></g>,
  edit: <g><rect x="4" y="4" width="30" height="28" fill="#fce94f" stroke="#c4a000" strokeWidth="2.400" /><g transform="translate(14 12) scale(.76)"><Pencil /></g></g>,
  wrench: <Wrench x={2} y={1} />,

  qgis: (
    <g>
      <defs><linearGradient id="qg" x1="0" y1="0" x2="0" y2="1"><stop offset="0" stopColor="#93b023" /><stop offset="1" stopColor="#589632" /></linearGradient></defs>
      <path d="M38 31A17 17 0 1 0 29 40" stroke="url(#qg)" strokeWidth="8.500" />
      <path d="M26 26L44 44" stroke="#fff" strokeWidth="12" /><path d="M30 29L44 44" stroke="#5ea036" strokeWidth="8" /><path d="M26 25L32 31" stroke="#f5dc3a" strokeWidth="7" /><path d="M19 17H26L30 23L24 27L19 24Z" fill="#ee7913" />
    </g>
  ),
  gdal: <g><circle cx="28" cy="26" r="17" fill="#6cc0ee" /><path d="M18 18L30 12L36 20L28 30Z" fill="#3a9a4a" /><path d="M2 14L10 6L24 0L18 10L6 18Z" fill="#444" /><text x="24" y="43" textAnchor="middle" fontSize="16" fontWeight="700" fontFamily="Liberation Sans, sans-serif" fill="#000">GDAL</text></g>,
  grass: <g stroke="#222" strokeWidth="1.600"><path d="M24 1L42 22L24 40L6 22Z" fill="#fff" /><path d="M6 26L24 45L42 26M8 46H40" strokeWidth="2.400" /><path d="M24 38V12M24 38C22 28 18 22 14 20M24 38C26 28 30 22 34 18M22 36C18 30 14 28 12 28M26 36C30 30 34 28 37 26" stroke="#2c9a2c" strokeWidth="2.600" /></g>,
  qneat: <g><text transform="translate(17 46) rotate(-90)" fontSize="13" fontWeight="700" fontFamily="Liberation Sans, sans-serif" fill="#111">QNEAT</text><path d="M27 3H43V18L36 23L44 28V44H27V36" stroke="#111" strokeWidth="3.600" /><circle cx="28" cy="12" r="4" stroke="#111" strokeWidth="2" /><circle cx="40" cy="26" r="4" fill="#fff" stroke="#111" strokeWidth="2" /></g>,
  saga: <g stroke="#0c5494" strokeWidth="5"><path d="M42 12A20 20 0 1 0 42 36" /><path d="M8 30L24 12H42M10 34L28 14L42 32H16" strokeWidth="4" /><path d="M42 4V14" /></g>,
  lens: <g stroke="#8a8a8a" strokeWidth="3.600"><circle cx="20" cy="19" r="15" /><path d="M31 30L44 44" strokeWidth="5" /></g>,
};

/* ---------- toolbar pieces ---------- */

const Arrow = ({ dim }) => (
  <svg width="18" height="9" viewBox="0 0 18 9" className={dim ? 'opacity-50' : ''} aria-hidden="true"><path d="M1 0H17L9 9Z" fill="#555" /></svg>
);

function Tool({ icon, label, menu, dim, on }) {
  return (
    <div className="flex">
      <button
        type="button"
        aria-label={label}
        className={'flex h-[62px] w-16 items-center justify-center rounded-md border-2 ' + (on ? 'border-[#a3a3a3] bg-[#d9d9d9]' : 'border-transparent')}
      >
        <Svg>{ICONS[icon]}</Svg>
      </button>
      {menu && (
        <button type="button" aria-label={label + ' options'} className="flex w-6 items-center justify-center"><Arrow dim={dim} /></button>
      )}
    </div>
  );
}

const Grip = () => (
  <div className="flex w-[26px] shrink-0 items-center justify-center">
    <div className="grid grid-cols-2 gap-x-1 gap-y-1">
      {Array.from({ length: 12 }, (_, i) => <span key={i} className="h-[2px] w-[2px] bg-[#b4b4b4]" />)}
    </div>
  </div>
);

const Divider = () => <div className="flex w-3 items-center justify-center self-stretch"><span className="h-[38px] w-[4px] border-l-2 border-[#d2d2d2] bg-white" /></div>;

function Toolbar({ items, last }) {
  return (
    <div className={'flex border-b-2 border-[#b0b0b0] pt-[2px] ' + (last ? 'flex-1' : 'pr-2 shadow-[1px_0_0_#f4f4f4]')} role="toolbar">
      <Grip />
      <div className="flex items-center gap-[2px]">
        {items.map((it, i) => (it === '|' ? <Divider key={i} /> : <Tool key={i} icon={it[0]} label={it[1]} menu={it[2]} dim={it[2] === 'dim'} on={it[3]} />))}
      </div>
    </div>
  );
}

const ROW1 = [
  [['new', 'New project'], ['open', 'Open project'], ['save', 'Save project'], ['layout', 'New print layout'], ['manager', 'Layout manager'], ['style', 'Style manager']],
  [
    ['hand', 'Pan map', null, true], ['pan', 'Pan to selection'], ['zoomIn', 'Zoom in'], ['zoomOut', 'Zoom out'], ['zoomFull', 'Zoom full'], ['zoomSel', 'Zoom to selection'], ['zoomLayer', 'Zoom to layer'],
    ['zoomOne', 'Zoom to native resolution'], ['zoomLast', 'Zoom last'], ['zoomNext', 'Zoom next'], ['newMap', 'New map view'], ['newMark', 'New bookmark'], ['marks', 'Show bookmarks'], ['refresh', 'Refresh'],
  ],
  [
    ['identify', 'Identify features'], ['action', 'Run action', 'dim'], ['select', 'Select features', 'on'], ['rows', 'Select by value', 'on'], ['deselect', 'Deselect'], ['table', 'Attribute table'],
    ['abacus', 'Field calculator'], ['gear', 'Processing toolbox', null, true], ['sigma', 'Statistics'], ['measure', 'Measure', 'on'], ['tips', 'Map tips'], ['annot', 'Annotation', 'on'],
  ],
];
const ROW2 = [
  [['source', 'Data source manager'], ['geopkg', 'New GeoPackage'], ['shape', 'New shapefile'], ['feather', 'New SpatiaLite layer'], ['chip', 'New scratch layer'], '|', ['virtual', 'New virtual layer']],
  [
    ['pencils', 'Current edits'], ['pencil', 'Toggle editing'], ['saveEdits', 'Save edits'], ['polygon', 'Add polygon'], ['vertex', 'Vertex tool', 'dim'], ['attrs', 'Modify attributes'], ['trash', 'Delete selected'],
    ['cut', 'Cut'], ['copy', 'Copy'], ['paste', 'Paste'], ['undo', 'Undo'], ['redo', 'Redo'],
  ],
  [['label', 'Layer labeling'], ['diagram', 'Layer diagram'], '|', ['pinLabel', 'Highlight pinned labels'], ['redLabel', 'Show unplaced labels'], '|', ['lPin', 'Pin labels'], ['lEye', 'Show or hide labels'], ['lMove', 'Move label'], ['lRotate', 'Rotate label'], ['lEdit', 'Change label']],
  [['meta', 'MetaSearch']],
  [['python', 'Python console'], ['binoculars', 'Search plugins']],
  [['help', 'Help']],
  [],
];
const ROW3 = [[['search3', 'Quick search'], ['osm', 'OSM place search']]];

const TOP_BG = 'flex bg-linear-to-b from-[#f6f6f6] to-[#ebebeb] ';

function ToolRow({ bars, height }) {
  return (
    <div className={TOP_BG + height}>
      {bars.map((b, i) => <Toolbar key={i} items={b} last={i === bars.length - 1} />)}
    </div>
  );
}

/* ---------- docks ---------- */

function DockTitle({ children, className = '' }) {
  return (
    <div className={'flex items-center justify-between ' + className}>
      <h2 className="text-[22px] leading-7">{children}</h2>
      <div className="flex gap-[6px]">
        <button type="button" aria-label={'Float ' + children}>
          <svg width="22" height="22" viewBox="0 0 22 22" fill="none" stroke="#666" strokeWidth="2"><rect x="1" y="1" width="20" height="20" rx="4" /><rect x="9" y="5" width="8" height="9" rx="1" /><rect x="5" y="9" width="8" height="8" rx="1" fill="#ececec" /></svg>
        </button>
        <button type="button" aria-label={'Close ' + children}>
          <svg width="22" height="22" viewBox="0 0 22 22" fill="none" stroke="#666" strokeWidth="2"><rect x="1" y="1" width="20" height="20" rx="4" /><path d="M6 6L16 16M16 6L6 16" strokeWidth="4" /></svg>
        </button>
      </div>
    </div>
  );
}

const SmallTool = ({ icon, label }) => (
  <button type="button" aria-label={label} className="flex h-12 w-12 items-center justify-center"><Svg size={32}>{ICONS[icon]}</Svg></button>
);

function Check({ id, label, size }) {
  return (
    <span className="relative flex">
      <input id={id} type="checkbox" defaultChecked aria-label={label} className={'peer appearance-none border-2 border-[#b4b4b4] bg-white ' + size} />
      <svg viewBox="0 0 28 28" className="pointer-events-none absolute inset-0 hidden h-full w-full peer-checked:block" fill="none" aria-hidden="true"><path d="M7 15L12 21L21 6" stroke="#000" strokeWidth="3" /></svg>
    </span>
  );
}

function LayersDock() {
  return (
    <section className="flex w-[716px] shrink-0 flex-col">
      <DockTitle className="h-[38px] pl-2 pr-[2px]">Layers</DockTitle>
      <div className="mb-[2px] flex h-[60px] items-center gap-[2px] pl-2">
        <SmallTool icon="brush" label="Layer styling" />
        <SmallTool icon="group" label="Add group" />
        <SmallTool icon="eye" label="Map themes" />
        <SmallTool icon="filter" label="Filter legend" />
        <div className="flex">
          <SmallTool icon="expr" label="Filter by expression" />
          <button type="button" aria-label="Filter options" className="flex w-6 items-center justify-center"><Arrow /></button>
        </div>
        <SmallTool icon="expand" label="Expand all" />
        <SmallTool icon="collapse" label="Collapse all" />
        <SmallTool icon="remove" label="Remove layer" />
      </div>
      <ul className="flex-1 border-2 border-l border-[#b9b9b9] bg-white">
        <li className="flex h-9 items-center bg-[#0a6ae0] pl-[47px] pr-[2px]">
          <Check label="Show tl_2018_34_tract" size="h-7 w-7" />
          <span className="ml-3 h-8 w-8 border-2 border-[#9ba09b] bg-[#b9bcb5]" />
          <span className="ml-3 flex-1 text-[26px] leading-8 font-bold text-white underline decoration-2 underline-offset-[5px]">tl_2018_34_tract</span>
          <span className="h-8 w-[6px] bg-[#dcdcdc]" />
        </li>
      </ul>
    </section>
  );
}

const GROUPS = [
  ['clock', 'Recently used'],
  ...['Cartography', 'Database', 'File tools', 'Graphics', 'Interpolation', 'Layer tools', 'Network analysis', 'Raster analysis', 'Raster terrain analysis', 'Raster tools', 'Vector analysis', 'Vector creation', 'Vector general', 'Vector geometry', 'Vector overlay', 'Vector selection', 'Vector table'].map((t) => ['qgis', t]),
  ['gdal', 'GDAL'], ['grass', 'GRASS'], ['qneat', 'QNEAT3 - Qgis Network Analysis Toolbox'], ['saga', 'SAGA'],
];

function ToolboxDock() {
  return (
    <section className="flex w-[809px] shrink-0 flex-col">
      <DockTitle className="h-[38px] pl-[7px] pr-[4px]">Processing Toolbox</DockTitle>
      <div className="mb-[2px] flex h-[60px] items-center gap-[2px] pl-2">
        <SmallTool icon="gears" label="Models" />
        <SmallTool icon="py2" label="Scripts" />
        <SmallTool icon="clock" label="History" />
        <SmallTool icon="doc" label="Results viewer" />
        <Divider />
        <SmallTool icon="edit" label="Edit in place" />
        <Divider />
        <SmallTool icon="wrench" label="Options" />
      </div>
      <label className="flex h-12 items-center gap-3 rounded border-2 border-[#a9a9a9] bg-white pl-4 shadow-[inset_0_2px_0_#ececec]">
        <Svg size={26}>{ICONS.lens}</Svg>
        <input aria-label="Search algorithms" placeholder="Search..." className="w-full bg-transparent text-[26px] leading-8 outline-none placeholder:text-[#7f7f7f]" />
      </label>
      <ul className="flex-1 border border-[#b9b9b9] bg-white">
        {GROUPS.map(([icon, text]) => (
          <li key={text}>
            <button type="button" className="flex h-9 w-full items-center pl-4 text-left text-[26px] leading-8">
              <svg width="9" height="16" viewBox="0 0 9 16" className="mr-[21px] shrink-0" aria-hidden="true"><path d="M0 0L9 8L0 16Z" fill="#555" /></svg>
              <Svg size={32}>{ICONS[icon]}</Svg>
              <span className="ml-3">{text}</span>
            </button>
          </li>
        ))}
      </ul>
    </section>
  );
}

const CloseX = () => (
  <svg width="26" height="24" viewBox="0 0 26 24" aria-hidden="true"><path d="M22 0C16 4 8 13 0 22L7 23C10 16 17 8 24 2ZM5 1L9 2C12 10 18 16 25 20V23L18 22C12 16 8 10 5 1Z" fill="#1c1c1c" /></svg>
);

const LOG = [
  ['2020-11-21T18:25:39', 'INFO', 'Executing'],
  ['2020-11-21T18:26:05', 'INFO', '210 matching feature(s) selected'],
];

function Tab({ text, width, on }) {
  return (
    <div
      className={
        'flex items-center gap-[11px] rounded-t-md border-x-2 pl-[22px] ' + width +
        (on ? ' h-[62px] border-t-[3px] border-[#a8a8a8] bg-white' : ' -mr-[2px] h-14 border-t-[3px] border-b-[3px] border-x-[#b9b9b9] border-t-[#b4b4b4] border-b-[#a8a8a8] bg-[#e5e5e5]')
      }
    >
      <button type="button" role="tab" aria-selected={!!on} className="text-[26px] leading-8 whitespace-nowrap">{text}</button>
      <button type="button" aria-label={'Close ' + text}><CloseX /></button>
    </div>
  );
}

function LogDock() {
  return (
    <section className="flex h-[500px] shrink-0 flex-col">
      <DockTitle className="h-9 pl-2 pr-[2px]">Log Messages</DockTitle>
      <div className="flex h-[62px] items-end" role="tablist">
        <Tab text="Plugins" width="w-[188px]" />
        <Tab text="Python warning" width="w-[288px]" />
        <Tab text="General" width="w-[192px]" />
        <Tab text="Messages" width="w-[216px]" on />
        <div className="flex-1 border-b-[3px] border-[#a8a8a8]" />
      </div>
      <div className="flex flex-1 border border-b-[3px] border-t-0 border-[#a8a8a8] bg-white p-[2px]">
        <div className="flex-1 border border-[#b9b9b9] pt-[10px] pl-[10px]">
          <table className="text-[26px] leading-8">
            <tbody>
              {LOG.map(([t, level, msg]) => (
                <tr key={t}>
                  <td className="w-[298px] p-0">{t}</td>
                  <td className="w-[90px] p-0">{level}</td>
                  <td className="p-0">{msg}</td>
                </tr>
              ))}
            </tbody>
          </table>
        </div>
      </div>
    </section>
  );
}

const Dots = ({ vertical }) => (
  <div className={'flex items-center justify-center gap-1 ' + (vertical ? 'w-[15px] shrink-0 flex-col' : 'h-4 shrink-0')}>
    {Array.from({ length: 6 }, (_, i) => <span key={i} className="h-[2px] w-[2px] bg-[#b0b0b0]" />)}
  </div>
);

/* ---------- status bar ---------- */

const FIELD = 'rounded border-2 border-[#a9a9a9] bg-white shadow-[inset_0_2px_0_#ececec]';

function Spin({ id, value, width }) {
  return (
    <div className={'flex h-[45px] overflow-hidden ' + FIELD + ' ' + width}>
      <input id={id} defaultValue={value} className="min-w-0 flex-1 bg-transparent pl-2 text-[22px] outline-none" />
      <div className="flex w-[28px] flex-col items-center justify-center gap-[9px] border-l-2 border-[#b4b4b4] bg-linear-to-b from-white to-[#ececec]">
        <button type="button" aria-label="Increase"><svg width="15" height="9" viewBox="0 0 15 9" className="block"><path d="M0 9H15L7.500 0Z" fill="#555" /></svg></button>
        <button type="button" aria-label="Decrease"><svg width="15" height="9" viewBox="0 0 15 9" className="block"><path d="M0 0H15L7.500 9Z" fill="#555" /></svg></button>
      </div>
    </div>
  );
}

function StatusBar() {
  return (
    <footer className="flex h-[61px] shrink-0 items-center pt-[2px] pr-[6px] pl-2 text-[22px]">
      <label className={'flex h-12 w-[432px] items-center gap-[14px] pl-[14px] ' + FIELD}>
        <Svg size={28}>{ICONS.lens}</Svg>
        <input aria-label="Type to locate" placeholder="Type to locate (⌘K)" className="w-full bg-transparent text-[26px] outline-none placeholder:text-[#7f7f7f]" />
      </label>
      <span className="ml-[18px]">210 feature(s) selected on layer tl_2018_34_tract.</span>
      <div className="ml-auto flex items-center">
        <label htmlFor="coord">Coordinate</label>
        <input id="coord" defaultValue="-76.503,40.791" className={'ml-2 h-11 w-[194px] text-center ' + FIELD} />
        <button type="button" aria-label="Toggle extents display" className="mr-[7px] ml-[11px]">
          <svg width="30" height="34" viewBox="0 0 30 34" fill="none" aria-hidden="true"><path d="M16 14C24 12 31 22 27 31L16 34Z" fill="#b8b0ae" /><path d="M4 4C8-1 13 2 14 8L17 15C24 16 26 24 23 29C19 35 10 33 9 27C8 24 9 21 11 19L7 18C2 15 1 9 4 4Z" fill="#fff" stroke="#000" strokeWidth="2.800" /><path d="M6 6L10 15M10 4L13 13M11 19L17 15" stroke="#000" strokeWidth="2.800" /><circle cx="16" cy="25" r="3" fill="#000" /><path d="M20 7L28 2M0 21L5 22" stroke="#000" strokeWidth="2" strokeDasharray="2 2" /></svg>
        </button>
        <label htmlFor="scale" className="ml-[19px]">Scale</label>
        <div className={'relative ml-2 flex h-12 w-[186px] overflow-hidden ' + FIELD}>
          <select id="scale" className="w-full appearance-none bg-transparent pl-[6px] outline-none"><option>1:1572472</option></select>
          <span className="pointer-events-none absolute inset-y-0 right-0 flex w-10 items-center justify-center border-l border-[#b4b4b4] bg-linear-to-b from-white to-[#ececec]"><Arrow /></span>
        </div>
        <button type="button" aria-label="Lock scale" className="mr-[18px] ml-6">
          <svg width="26" height="32" viewBox="0 0 26 32" fill="none" aria-hidden="true"><rect x="0" y="14" width="26" height="17" rx="2" fill="#666" /><path d="M5 14V9a8 8 0 0 1 16 0V14" stroke="#8c8c8c" strokeWidth="3.500" /></svg>
        </button>
        <label htmlFor="mag">Magnifier</label>
        <div className="ml-2"><Spin id="mag" value="100%" width="w-[191px]" /></div>
        <label htmlFor="rot" className="ml-5">Rotation</label>
        <div className="ml-5"><Spin id="rot" value="0.0 °" width="w-[182px]" /></div>
        <span className="ml-[14px]"><Check id="render" size="h-7 w-7" /></span>
        <label htmlFor="render" className="ml-[10px]">Render</label>
        <button type="button" className="ml-8 flex items-center gap-1">
          <svg width="32" height="28" viewBox="0 0 32 28" fill="none" stroke="#666" strokeWidth="2" aria-hidden="true"><path d="M10 1H22L31 12H1Z" fill="#aaa" /><path d="M1 12L16 17L31 12M5 7H27M12 1L9 13M16 1V16M20 1L23 13" /><path d="M4 14C4 22 10 27 16 27C22 27 28 22 28 14M11 15C11 21 13 27 16 27C19 27 21 21 21 15M5 20H27" /></svg>
          EPSG:4269
        </button>
        <button type="button" aria-label="Messages" className="ml-10 flex h-[50px] w-12 items-center justify-center rounded-md border-2 border-[#a3a3a3] bg-[#d6d6d6]">
          <svg width="34" height="32" viewBox="0 0 34 32" aria-hidden="true"><ellipse cx="17" cy="14" rx="16" ry="13" fill="#666" /><path d="M18 24L31 31L28 20Z" fill="#666" /></svg>
        </button>
      </div>
    </footer>
  );
}

export default function App() {
  return (
    <div className="flex h-screen flex-col overflow-hidden bg-white px-28 pt-16 pb-40 font-['Inter','DejaVu_Sans',sans-serif] text-black">
      <div className="flex min-h-0 flex-1 flex-col overflow-hidden rounded-[10px] bg-[#ececec] shadow-[0_0_2px_rgba(0,0,0,0.6),0_36px_90px_rgba(0,0,0,0.55)]">
        <header className="grid h-11 shrink-0 grid-cols-[1fr_auto_1fr] items-center border-b-2 border-[#b4b0b4] bg-linear-to-b from-[#e8e6e9] to-[#d2d0d3] pt-[2px]">
          <div className="flex gap-4 pl-4">
            <button type="button" aria-label="Close" className="h-6 w-6 rounded-full border border-[#d85548] bg-[#ed6b60]" />
            <button type="button" aria-label="Minimize" className="h-6 w-6 rounded-full border border-[#dba13a] bg-[#f5bf4f]" />
            <button type="button" aria-label="Zoom" className="h-6 w-6 rounded-full border border-[#4aa93c] bg-[#61c554]" />
          </div>
          <h1 className="text-[26px] leading-8 text-[#3a3a3a]">*Untitled Project - QGIS</h1>
        </header>
        <ToolRow bars={ROW1} height="h-[77px] shrink-0" />
        <ToolRow bars={ROW2} height="h-[78px] shrink-0" />
        <ToolRow bars={ROW3} height="h-[76px] shrink-0" />
        <main className="flex min-h-0 flex-1 pt-[3px]">
          <LayersDock />
          <Dots vertical />
          <div className="flex min-w-0 flex-1 flex-col">
            <div className="min-h-0 flex-1 border border-[#b9b9b9] bg-white"><MapCanvas /></div>
            <Dots />
            <LogDock />
          </div>
          <Dots vertical />
          <ToolboxDock />
        </main>
        <StatusBar />
      </div>
    </div>
  );
}
